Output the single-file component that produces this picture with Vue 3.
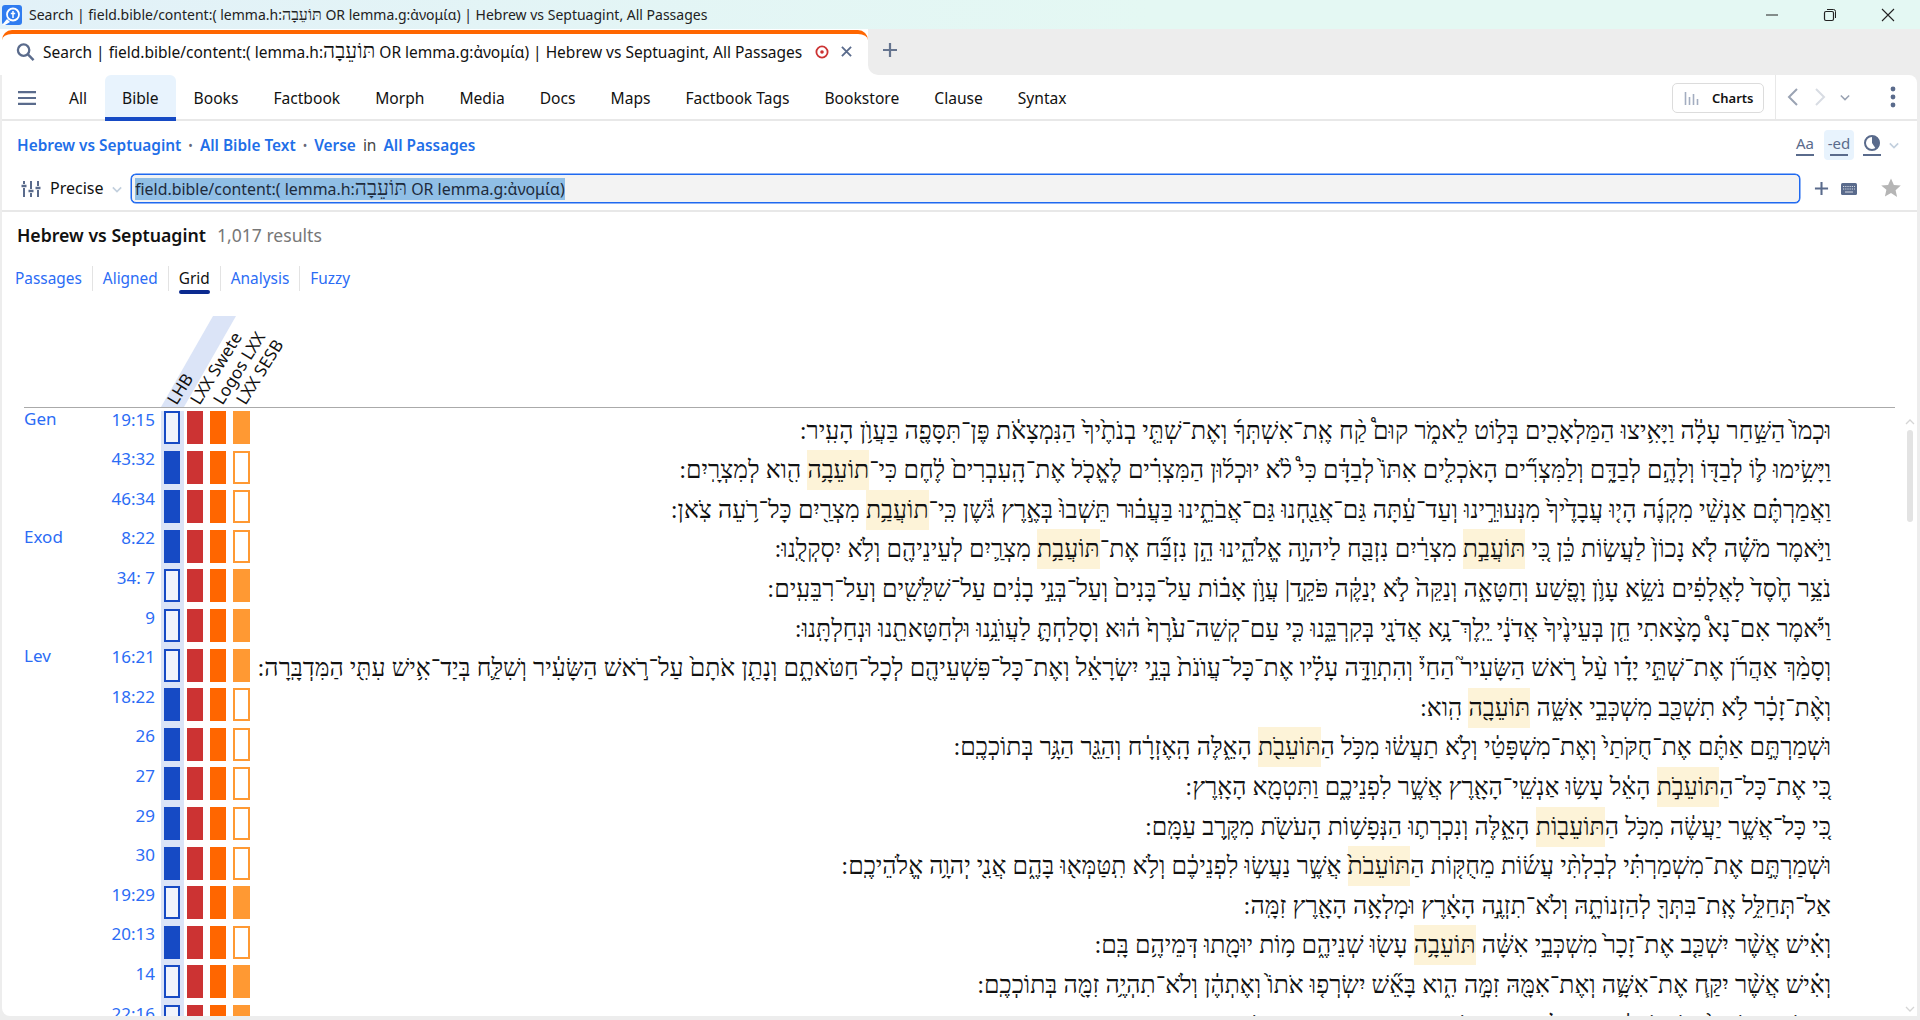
<template>
  <div class="app">
    <div class="titlebar">
      <svg class="logo" viewBox="0 0 20 20">
        <rect width="20" height="20" rx="3" fill="#2f7cf0" />
        <path d="M0 20 L5 14 L8 17 L3 20Z" fill="#fff" />
        <circle cx="11" cy="9.5" r="6" fill="none" stroke="#fff" stroke-width="1.8" />
        <path d="M11 6v7M8.8 8.4h4.4" stroke="#fff" stroke-width="1.5" fill="none" />
      </svg>
      <span class="title-text">Search | field.bible/content:( lemma.h:<span class="he">{{ lemma }}</span> OR lemma.g:ἀνομία) | Hebrew vs Septuagint, All Passages</span>
      <div class="win-btns">
        <svg viewBox="0 0 14 14" class="win"><path d="M1 7h12" stroke="#222" stroke-width="1" /></svg>
        <svg viewBox="0 0 14 14" class="win">
          <rect x="1.5" y="3.5" width="9" height="9" rx="1.5" fill="none" stroke="#222" stroke-width="1.2" />
          <path d="M4 1.5h6.5a2 2 0 0 1 2 2V10" fill="none" stroke="#222" stroke-width="1" />
        </svg>
        <svg viewBox="0 0 14 14" class="win"><path d="M1 1l12 12M13 1L1 13" stroke="#222" stroke-width="1.1" /></svg>
      </div>
    </div>

    <div class="tabstrip">
      <div class="tab">
        <svg class="tab-search" viewBox="0 0 20 20">
          <circle cx="8" cy="8" r="6" fill="none" stroke="#5a6b8c" stroke-width="2.4" />
          <path d="M12.5 12.5L18.5 18.5" stroke="#5a6b8c" stroke-width="2.6" />
        </svg>
        <span class="tab-title">Search | field.bible/content:( lemma.h:<span class="he">{{ lemma }}</span> OR lemma.g:ἀνομία) | Hebrew vs Septuagint, All Passages</span>
        <svg class="tab-target" viewBox="0 0 14 14">
          <circle cx="7" cy="7" r="5.6" fill="none" stroke="#cc3333" stroke-width="1.8" />
          <circle cx="7" cy="7" r="1.8" fill="#cc3333" />
        </svg>
        <svg class="tab-close" viewBox="0 0 12 12">
          <path d="M1 1l10 10M11 1L1 11" stroke="#5a6b8c" stroke-width="2" />
        </svg>
      </div>
      <div class="strip-rest">
        <svg class="tab-add" viewBox="0 0 16 16">
          <path d="M8 1v14M1 8h14" stroke="#66758f" stroke-width="2.2" />
        </svg>
      </div>
    </div>

    <div class="panel">
      <nav class="nav">
        <svg class="burger" viewBox="0 0 18 14">
          <path d="M0 1.200h18M0 7h18M0 12.800h18" stroke="#5a6b8c" stroke-width="2.2" />
        </svg>
        <a v-for="t in navTabs" :key="t" class="nav-tab" :class="{ active: t === 'Bible' }">{{ t }}</a>
        <div class="nav-right">
          <button class="charts">
            <svg viewBox="0 0 16 16" class="charts-ico">
              <path d="M1.5 2v13M5.5 7v8M9.5 4v11M13.5 9v6" stroke="#a3adc0" stroke-width="1.6" />
            </svg>
            Charts
          </button>
          <div class="nav-tools">
            <svg viewBox="0 0 12 20" class="arrow"><path d="M10 2L2 10l8 8" fill="none" stroke="#9aa3b3" stroke-width="2" /></svg>
            <svg viewBox="0 0 12 20" class="arrow next"><path d="M2 2l8 8-8 8" fill="none" stroke="#d8dce3" stroke-width="2" /></svg>
            <svg viewBox="0 0 12 8" class="chev"><path d="M1 1.5l5 5 5-5" fill="none" stroke="#9aa3b3" stroke-width="1.8" /></svg>
            <svg viewBox="0 0 6 22" class="dots">
              <circle cx="3" cy="3" r="2.400" fill="#5a6b8c" />
              <circle cx="3" cy="11" r="2.400" fill="#5a6b8c" />
              <circle cx="3" cy="19" r="2.400" fill="#5a6b8c" />
            </svg>
          </div>
        </div>
      </nav>

      <div class="crumbs">
        <a>Hebrew vs Septuagint</a><i>•</i><a>All Bible Text</a><i>•</i><a>Verse</a>
        <span class="in">in</span><a>All Passages</a>
        <div class="crumb-tools">
          <span class="tool">Aa</span>
          <span class="tool on">-ed</span>
          <span class="tool contrast">
            <svg viewBox="0 0 18 18" width="18" height="18">
              <circle cx="9" cy="9" r="7" fill="#fff" stroke="#5a6b8c" stroke-width="2" />
              <path d="M9 9V2a7 7 0 0 1 4 13z" fill="#5a6b8c" />
            </svg>
          </span>
          <svg viewBox="0 0 12 8" class="chev pale"><path d="M1 1.5l5 5 5-5" fill="none" stroke="#c3d0de" stroke-width="2" /></svg>
        </div>
      </div>

      <div class="searchrow">
        <svg class="sliders" viewBox="0 0 20 18">
          <path d="M3 1v3M3 8v9M10 1v8M10 13v4M17 1v5M17 10v7" stroke="#5a6b8c" stroke-width="2" />
          <path d="M0.500 6h5M7.500 11h5M14.500 8h5" stroke="#5a6b8c" stroke-width="2.400" />
        </svg>
        <span class="precise">Precise</span>
        <svg viewBox="0 0 12 8" class="precise-chev"><path d="M1 1.5l5 5 5-5" fill="none" stroke="#c3d0de" stroke-width="2" /></svg>
        <div class="query"><span class="sel">field.bible/content:( lemma.h:<span class="he">{{ lemma }}</span> OR lemma.g:ἀνομία)</span></div>
        <svg class="q-add" viewBox="0 0 16 16"><path d="M8 1v14M1 8h14" stroke="#5a6b8c" stroke-width="2.2" /></svg>
        <svg class="q-keys" viewBox="0 0 16 12">
          <rect width="16" height="12" rx="1.5" fill="#5a6b8c" />
          <path d="M2 3.5h12M2 6h12" stroke="#d5dae3" stroke-width="1.2" stroke-dasharray="1.2 1" />
          <path d="M4 9h8" stroke="#d5dae3" stroke-width="1.2" />
        </svg>
        <svg class="q-star" viewBox="0 0 20 20">
          <path d="M10 0.500l2.900 6.400 6.900.7-5.200 4.600 1.500 6.900L10 15l-6.100 3.600 1.500-6.900L0.200 7.600l6.900-.7z" fill="#b5b5b5" />
        </svg>
      </div>

      <div class="results">
        <h2>Hebrew vs Septuagint</h2>
        <span class="count">1,017 results</span>
      </div>

      <div class="views">
        <a v-for="v in views" :key="v" class="view" :class="{ current: v === 'Grid' }">{{ v }}</a>
      </div>

      <div class="grid">
        <div class="grid-head">
          <svg class="lhb-band" viewBox="0 0 76 92" width="76" height="92">
            <polygon points="0,92 52,1 75,1 23,92" fill="#dbe4f7" />
          </svg>
          <span v-for="(h, i) in heads" :key="h" class="head" :style="{ left: 155.5 + i * 23 + 'px' }">{{ h }}</span>
        </div>

        <div class="rows">
          <div v-for="r in rows" :key="r.book + r.ref" class="row">
            <span class="book">{{ r.book }}</span>
            <span class="ref">{{ r.ref }}</span>
            <span class="lhb"><i class="bar" :class="r.lhb ? 'blue' : 'blue-off'"></i></span>
            <i class="bar red"></i>
            <i class="bar orange"></i>
            <i class="bar last" :class="r.sesb ? 'amber' : 'amber-off'"></i>
            <div class="verse" dir="rtl">
              <template v-for="(part, i) in r.text.split(/[{}]/)" :key="i">
                <span v-if="i % 2" class="hit">{{ part }}</span>
                <template v-else>{{ part }}</template>
              </template>
            </div>
          </div>
        </div>

        <div class="scroll">
          <svg viewBox="0 0 10 6" class="sc-arrow"><path d="M1 5l4-4 4 4" fill="none" stroke="#d5d5d5" stroke-width="1.3" /></svg>
          <div class="thumb"></div>
          <svg viewBox="0 0 10 6" class="sc-arrow down"><path d="M1 1l4 4 4-4" fill="none" stroke="#d5d5d5" stroke-width="1.3" /></svg>
        </div>
      </div>
    </div>
  </div>
</template>

<script setup>
const lemma = 'תּוֹעֵבָה'

const navTabs = ['All', 'Bible', 'Books', 'Factbook', 'Morph', 'Media', 'Docs', 'Maps', 'Factbook Tags', 'Bookstore', 'Clause', 'Syntax']
const views = ['Passages', 'Aligned', 'Grid', 'Analysis', 'Fuzzy']
const heads = ['LHB', 'LXX Swete', 'Logos LXX', 'LXX SESB']

// {...} marks the hit that gets the yellow background
const rows = [
  { book: 'Gen', ref: '19:15', lhb: 0, sesb: 1, text: 'וּכְמוֹ֙ הַשַּׁ֣חַר עָלָ֔ה וַיָּאִ֥יצוּ הַמַּלְאָכִ֖ים בְּל֣וֹט לֵאמֹ֑ר קוּם֩ קַ֨ח אֶֽת־אִשְׁתְּךָ֜ וְאֶת־שְׁתֵּ֤י בְנֹתֶ֙יךָ֙ הַנִּמְצָאֹ֔ת פֶּן־תִּסָּפֶ֖ה בַּעֲוֺ֥ן הָעִֽיר:' },
  { book: '', ref: '43:32', lhb: 1, sesb: 0, text: 'וַיָּשִׂ֥ימוּ ל֛וֹ לְבַדּ֖וֹ וְלָהֶ֣ם לְבַדָּ֑ם וְלַמִּצְרִ֞ים הָאֹכְלִ֤ים אִתּוֹ֙ לְבַדָּ֔ם כִּי֩ לֹ֨א יוּכְל֜וּן הַמִּצְרִ֗ים לֶאֱכֹ֤ל אֶת־הָֽעִבְרִים֙ לֶ֔חֶם כִּי־{תוֹעֵבָ֥ה} הִ֖וא לְמִצְרָֽיִם:' },
  { book: '', ref: '46:34', lhb: 1, sesb: 0, text: 'וַאֲמַרְתֶּ֗ם אַנְשֵׁ֨י מִקְנֶ֜ה הָי֤וּ עֲבָדֶ֙יךָ֙ מִנְּעוּרֵ֣ינוּ וְעַד־עַ֔תָּה גַּם־אֲנַ֖חְנוּ גַּם־אֲבֹתֵ֑ינוּ בַּעֲב֗וּר תֵּשְׁבוּ֙ בְּאֶ֣רֶץ גֹּ֔שֶׁן כִּֽי־{תוֹעֲבַ֥ת} מִצְרַ֖יִם כָּל־רֹ֥עֵה צֹֽאן:' },
  { book: 'Exod', ref: '8:22', lhb: 1, sesb: 0, text: 'וַיֹּ֣אמֶר מֹשֶׁ֗ה לֹ֤א נָכוֹן֙ לַעֲשׂ֣וֹת כֵּ֔ן כִּ֚י {תּוֹעֲבַ֣ת} מִצְרַ֔יִם נִזְבַּ֖ח לַיהוָ֣ה אֱלֹהֵ֑ינוּ הֵ֣ן נִזְבַּ֞ח אֶת־{תּוֹעֲבַ֥ת} מִצְרַ֛יִם לְעֵינֵיהֶ֖ם וְלֹ֥א יִסְקְלֻֽנוּ:' },
  { book: '', ref: '34: 7', lhb: 0, sesb: 1, text: 'נֹצֵ֥ר חֶ֙סֶד֙ לָאֲלָפִ֔ים נֹשֵׂ֥א עָוֺ֛ן וָפֶ֖שַׁע וְחַטָּאָ֑ה וְנַקֵּה֙ לֹ֣א יְנַקֶּ֔ה פֹּקֵ֣ד| עֲוֺ֣ן אָב֗וֹת עַל־בָּנִים֙ וְעַל־בְּנֵ֣י בָנִ֔ים עַל־שִׁלֵּשִׁ֖ים וְעַל־רִבֵּעִֽים:' },
  { book: '', ref: '9', lhb: 0, sesb: 1, text: 'וַיֹּ֡אמֶר אִם־נָא֩ מָצָ֨אתִי חֵ֤ן בְּעֵינֶ֙יךָ֙ אֲדֹנָ֔י יֵֽלֶךְ־נָ֥א אֲדֹנָ֖י בְּקִרְבֵּ֑נוּ כִּ֤י עַם־קְשֵׁה־עֹ֙רֶף֙ ה֔וּא וְסָלַחְתָּ֛ לַעֲוֺנֵ֥נוּ וּלְחַטָּאתֵ֖נוּ וּנְחַלְתָּֽנוּ:' },
  { book: 'Lev', ref: '16:21', lhb: 0, sesb: 1, text: 'וְסָמַ֨ךְ אַהֲרֹ֜ן אֶת־שְׁתֵּ֣י יָדָ֗ו עַ֨ל רֹ֣אשׁ הַשָּׂעִיר֮ הַחַי֒ וְהִתְוַדָּ֣ה עָלָ֗יו אֶת־כָּל־עֲוֺנֹת֙ בְּנֵ֣י יִשְׂרָאֵ֔ל וְאֶת־כָּל־פִּשְׁעֵיהֶ֖ם לְכָל־חַטֹּאתָ֑ם וְנָתַ֤ן אֹתָם֙ עַל־רֹ֣אשׁ הַשָּׂעִ֔יר וְשִׁלַּ֛ח בְּיַד־אִ֥ישׁ עִתִּ֖י הַמִּדְבָּֽרָה:' },
  { book: '', ref: '18:22', lhb: 1, sesb: 0, text: 'וְאֶ֨ת־זָכָ֔ר לֹ֥א תִשְׁכַּ֖ב מִשְׁכְּבֵ֣י אִשָּׁ֑ה {תּוֹעֵבָ֖ה} הִֽוא:' },
  { book: '', ref: '26', lhb: 1, sesb: 0, text: 'וּשְׁמַרְתֶּ֣ם אַתֶּ֗ם אֶת־חֻקֹּתַי֙ וְאֶת־מִשְׁפָּטַ֔י וְלֹ֣א תַעֲשׂ֔וּ מִכֹּ֥ל הַ{תּוֹעֵבֹ֖ת} הָאֵ֑לֶּה הָֽאֶזְרָ֔ח וְהַגֵּ֖ר הַגָּ֥ר בְּתוֹכְכֶֽם:' },
  { book: '', ref: '27', lhb: 1, sesb: 0, text: 'כִּ֚י אֶת־כָּל־הַ{תּוֹעֵבֹ֣ת} הָאֵ֔ל עָשׂ֥וּ אַנְשֵֽׁי־הָאָ֖רֶץ אֲשֶׁ֣ר לִפְנֵיכֶ֑ם וַתִּטְמָ֖א הָאָֽרֶץ:' },
  { book: '', ref: '29', lhb: 1, sesb: 0, text: 'כִּ֚י כָּל־אֲשֶׁ֣ר יַעֲשֶׂ֔ה מִכֹּ֥ל הַ{תּוֹעֵב֖וֹת} הָאֵ֑לֶּה וְנִכְרְת֛וּ הַנְּפָשׁ֥וֹת הָעֹשֹׂ֖ת מִקֶּ֥רֶב עַמָּֽם:' },
  { book: '', ref: '30', lhb: 1, sesb: 0, text: 'וּשְׁמַרְתֶּ֣ם אֶת־מִשְׁמַרְתִּ֗י לְבִלְתִּ֨י עֲשׂ֜וֹת מֵחֻקּ֤וֹת הַ{תּוֹעֵבֹת֙} אֲשֶׁ֣ר נַעֲשׂ֣וּ לִפְנֵיכֶ֔ם וְלֹ֥א תִֽטַּמְּא֖וּ בָּהֶ֑ם אֲנִ֖י יְהוָ֥ה אֱלֹהֵיכֶֽם:' },
  { book: '', ref: '19:29', lhb: 0, sesb: 1, text: 'אַל־תְּחַלֵּ֥ל אֶֽת־בִּתְּךָ֖ לְהַזְנוֹתָ֑הּ וְלֹא־תִזְנֶ֣ה הָאָ֔רֶץ וּמָלְאָ֥ה הָאָ֖רֶץ זִמָּֽה:' },
  { book: '', ref: '20:13', lhb: 1, sesb: 0, text: 'וְאִ֗ישׁ אֲשֶׁ֨ר יִשְׁכַּ֤ב אֶת־זָכָר֙ מִשְׁכְּבֵ֣י אִשָּׁ֔ה {תּוֹעֵבָ֥ה} עָשׂ֖וּ שְׁנֵיהֶ֑ם מ֥וֹת יוּמָ֖תוּ דְּמֵיהֶ֥ם בָּֽם:' },
  { book: '', ref: '14', lhb: 0, sesb: 1, text: 'וְאִ֗ישׁ אֲשֶׁ֨ר יִקַּ֧ח אֶת־אִשָּׁ֛ה וְאֶת־אִמָּ֖הּ זִמָּ֣ה הִ֑וא בָּאֵ֞שׁ יִשְׂרְפ֤וּ אֹתוֹ֙ וְאֶתְהֶ֔ן וְלֹא־תִהְיֶ֥ה זִמָּ֖ה בְּתוֹכְכֶֽם:' },
  { book: '', ref: '22:16', lhb: 0, sesb: 1, text: 'וְהִשִּׂ֤יאוּ אוֹתָם֙ עֲוֺ֣ן אַשְׁמָ֔ה בְּאָכְלָ֖ם אֶת־קָדְשֵׁיהֶ֑ם כִּ֛י אֲנִ֥י יְהוָ֖ה מְקַדְּשָֽׁם:' },
]
</script>

<style>
html,
body {
  margin: 0;
  overflow: hidden;
}
</style>

<style scoped>
.app {
  width: 1920px;
  height: 1020px;
  display: flex;
  flex-direction: column;
  background: #ededed;
  font-family: "Noto Sans", "Liberation Serif", sans-serif;
  font-size: 15.5px;
  color: #111;
  overflow: hidden;
}
.he {
  font-family: "Liberation Serif", serif;
  font-size: 21px;
  line-height: 0;
}

.titlebar {
  height: 29px;
  flex: none;
  display: flex;
  align-items: center;
  padding-left: 2px;
  background: linear-gradient(to right, #e2f1f8, #e4f8f3 60%);
  font-size: 14px;
  color: #222;
}
.title-text .he {
  font-size: 16px;
}
.logo {
  width: 20px;
  height: 20px;
  margin-right: 7px;
}
.win-btns {
  margin-left: auto;
  display: flex;
  gap: 44px;
  padding-right: 25px;
}
.win {
  width: 14px;
  height: 14px;
}

.tabstrip {
  height: 46px;
  flex: none;
  display: flex;
  padding-left: 2px;
  background: linear-gradient(to right, #fff 1000px, #ededed 1000px);
}
.tab {
  width: 866px;
  display: flex;
  align-items: center;
  box-sizing: border-box;
  background: #fff;
  border-top: 4px solid #ff6600;
  border-radius: 10px 10px 0 0;
  margin-top: 1px;
  padding: 0 16px 6px 14px;
}
.tab-search {
  width: 19px;
  height: 20px;
  margin-right: 8px;
}
.tab-title {
  white-space: nowrap;
}
.tab-target {
  width: 14px;
  height: 14px;
  margin-left: auto;
}
.tab-close {
  width: 11px;
  height: 11px;
  margin-left: 12px;
}
.strip-rest {
  flex: 1;
  display: flex;
  align-items: center;
  padding: 0 0 4px 14px;
  background: #ededed;
  border-bottom-left-radius: 10px;
}
.tab-add {
  width: 16px;
  height: 16px;
}

.panel {
  flex: 1;
  min-height: 0;
  margin: 0 3px 4px 2px;
  display: flex;
  flex-direction: column;
  background: #fff;
  border-radius: 0 8px 0 8px;
  overflow: hidden;
}

.nav {
  height: 46px;
  flex: none;
  display: flex;
  align-items: stretch;
  box-sizing: border-box;
  border-bottom: 2px solid #e8e8e8;
}
.burger {
  width: 18px;
  height: 14px;
  margin: 16px 15.5px 0 16px;
}
.nav-tab {
  display: flex;
  align-items: center;
  padding: 2px 17.5px 0;
  height: 44px;
  box-sizing: border-box;
  font-size: 15.6px;
  white-space: nowrap;
}
.nav-tab.active {
  height: 46px;
  background: #e8f3fd;
  border-bottom: 4px solid #164ac4;
  border-radius: 6px 6px 0 0;
  padding-top: 4px;
}
.nav-right {
  margin-left: auto;
  display: flex;
  align-items: stretch;
}
.charts {
  width: 92px;
  height: 30px;
  margin: 8px 11px 0 0;
  display: flex;
  align-items: center;
  justify-content: flex-start;
  gap: 12px;
  padding: 0 0 0 11px;
  box-sizing: border-box;
  background: #fff;
  border: 1px solid #dcdcdc;
  border-radius: 5px;
  font: 600 13px "Noto Sans", sans-serif;
  color: #111;
}
.charts-ico {
  width: 16px;
  height: 16px;
}
.nav-tools {
  width: 142px;
  display: flex;
  align-items: center;
  box-sizing: border-box;
  border-left: 1px solid #e8e8e8;
  padding: 0 0 0 11px;
}
.arrow {
  width: 12px;
  height: 20px;
}
.arrow.next {
  margin-left: 15px;
}
.chev {
  width: 10px;
  height: 7px;
}
.nav-tools .chev {
  margin-left: 14px;
}
.dots {
  width: 6px;
  height: 22px;
  margin-left: 40px;
}

.crumbs {
  height: 48px;
  margin-bottom: 5px;
  flex: none;
  display: flex;
  align-items: center;
  padding-left: 15px;
  color: #444;
}
.crumbs a {
  color: #1f6fe8;
  font-size: 15.4px;
  font-weight: 600;
}
.crumbs i {
  font-style: normal;
  font-size: 12px;
  color: #667;
  margin: 0 7px;
}
.in {
  margin: 0 7px;
}
.crumb-tools {
  margin-left: auto;
  display: flex;
  align-items: center;
  padding: 0 18px 0 0;
}
.tool {
  width: 30px;
  height: 30px;
  margin: 0 0 0 4px;
  display: flex;
  flex-direction: column;
  align-items: center;
  justify-content: center;
  font-size: 15px;
  line-height: 17px;
  color: #5a6b8c;
  border-radius: 4px;
}
.tool::after {
  content: "";
  width: 18px;
  height: 2px;
  margin-top: 2px;
  background: #5a6b8c;
}
.tool.on {
  background: #e8f3fd;
}
.tool.contrast {
  margin-left: 3px;
}
.chev.pale {
  margin-left: 2px;
}

.searchrow {
  height: 38px;
  flex: none;
  display: flex;
  align-items: flex-start;
  box-sizing: border-box;
  border-bottom: 2px solid #e8e8e8;
  padding-left: 19px;
}
.sliders {
  width: 20px;
  height: 18px;
  margin-top: 6px;
}
.precise {
  margin: 3px 0 0 9px;
  font-size: 16px;
}
.precise-chev {
  width: 10px;
  height: 7px;
  margin: 12px 0 0 8px;
}
.query {
  width: 1669px;
  height: 29px;
  margin-left: 9.5px;
  box-sizing: border-box;
  display: flex;
  align-items: center;
  padding-left: 3px;
  background: #f3f3f3;
  border: 1px solid #1f69f0;
  box-shadow: 0 0 0 0.5px #1f69f0;
  border-radius: 5px;
  font-size: 15.9px;
  white-space: nowrap;
  color: #1e2b3c;
}
.sel {
  background: #90bfe6;
}
.q-add {
  width: 15px;
  height: 15px;
  margin: 7px 0 0 14px;
}
.q-keys {
  width: 16px;
  height: 12px;
  margin: 9px 0 0 12px;
}
.q-star {
  width: 20px;
  height: 20px;
  margin: 4px 0 0 24px;
}

.results {
  height: 46px;
  flex: none;
  display: flex;
  align-items: center;
  padding-left: 15px;
}
.results h2 {
  margin: 0;
  font-size: 17.7px;
  font-weight: 600;
}
.count {
  margin-left: 11px;
  font-size: 17.6px;
  color: #777;
}

.views {
  flex: none;
  height: 29px;
  margin-top: 8px;
  display: flex;
  align-items: stretch;
  padding-left: 13px;
  font-size: 15.4px;
}
.view {
  display: flex;
  align-items: center;
  height: 25px;
  padding: 0 10px;
  color: #2b6cf5;
  border-left: 1px solid #e3e3e3;
}
.view:first-child {
  border-left: 0;
  padding-left: 0;
}
.view.current {
  color: #111;
  position: relative;
}
.view.current::after {
  content: "";
  position: absolute;
  left: 10px;
  right: 10px;
  bottom: -3px;
  height: 4px;
  border-radius: 2px;
  background: #0b2a8f;
}

.grid {
  flex: 1;
  min-height: 0;
  position: relative;
  overflow: hidden;
  padding: 0 22px;
}
.grid-head {
  height: 113px;
  box-sizing: border-box;
  position: relative;
  border-bottom: 1px solid #aaa;
}
.lhb-band {
  position: absolute;
  left: 137px;
  bottom: 0;
}
.head {
  position: absolute;
  bottom: -1px;
  font-size: 17px;
  line-height: 20px;
  white-space: nowrap;
  color: #111;
  transform: rotate(-58deg);
  transform-origin: left bottom;
}

.rows {
  padding-top: 2.6px;
}
.row {
  height: 39.6px;
  display: flex;
  align-items: flex-start;
}
.book {
  width: 80px;
  margin-top: -3px;
  line-height: 22px;
  font-size: 17px;
  color: #2b6cf5;
}
.ref {
  width: 51px;
  margin-top: -3px;
  text-align: right;
  line-height: 24px;
  font-size: 17px;
  color: #2b6cf5;
  white-space: pre;
}
.lhb {
  margin-left: 6px;
  width: 23px;
  height: 39.6px;
  padding: 0.4px 3px 0;
  box-sizing: border-box;
  background: #dbe4f7;
}
.bar {
  display: block;
  width: 16px;
  height: 33px;
  box-sizing: border-box;
  margin-top: 0.4px;
}
.lhb .bar {
  margin-top: 0;
}
.red {
  margin-left: 3px;
  background: #cc3333;
}
.orange {
  margin-left: 7px;
  background: #ff6600;
}
.last {
  margin-left: 7px;
  width: 17px;
}
.blue {
  background: #164ac4;
}
.blue-off {
  background: #f1f4fb;
  border: 2px solid #164ac4;
}
.amber {
  background: #ff9933;
}
.amber-off {
  background: #fff;
  border: 2px solid #ff9933;
}
.verse {
  flex: 1;
  min-width: 0;
  height: 39.6px;
  padding-right: 64px;
  font-family: "Liberation Serif", "DejaVu Serif", serif;
  font-size: 24.8px;
  line-height: 39.6px;
  white-space: nowrap;
  color: #111;
  text-align: start;
}
.hit {
  display: inline-block;
  height: 40px;
  background: #fdf3d8;
}

.scroll {
  position: absolute;
  right: 2px;
  top: 124px;
  bottom: 4px;
  width: 10px;
  display: flex;
  flex-direction: column;
  align-items: center;
}
.sc-arrow {
  width: 10px;
  height: 6px;
}
.sc-arrow.down {
  margin-top: auto;
}
.thumb {
  width: 6px;
  height: 92px;
  margin-top: 5px;
  background: #e3e3e3;
  border-radius: 3px;
}
</style>
